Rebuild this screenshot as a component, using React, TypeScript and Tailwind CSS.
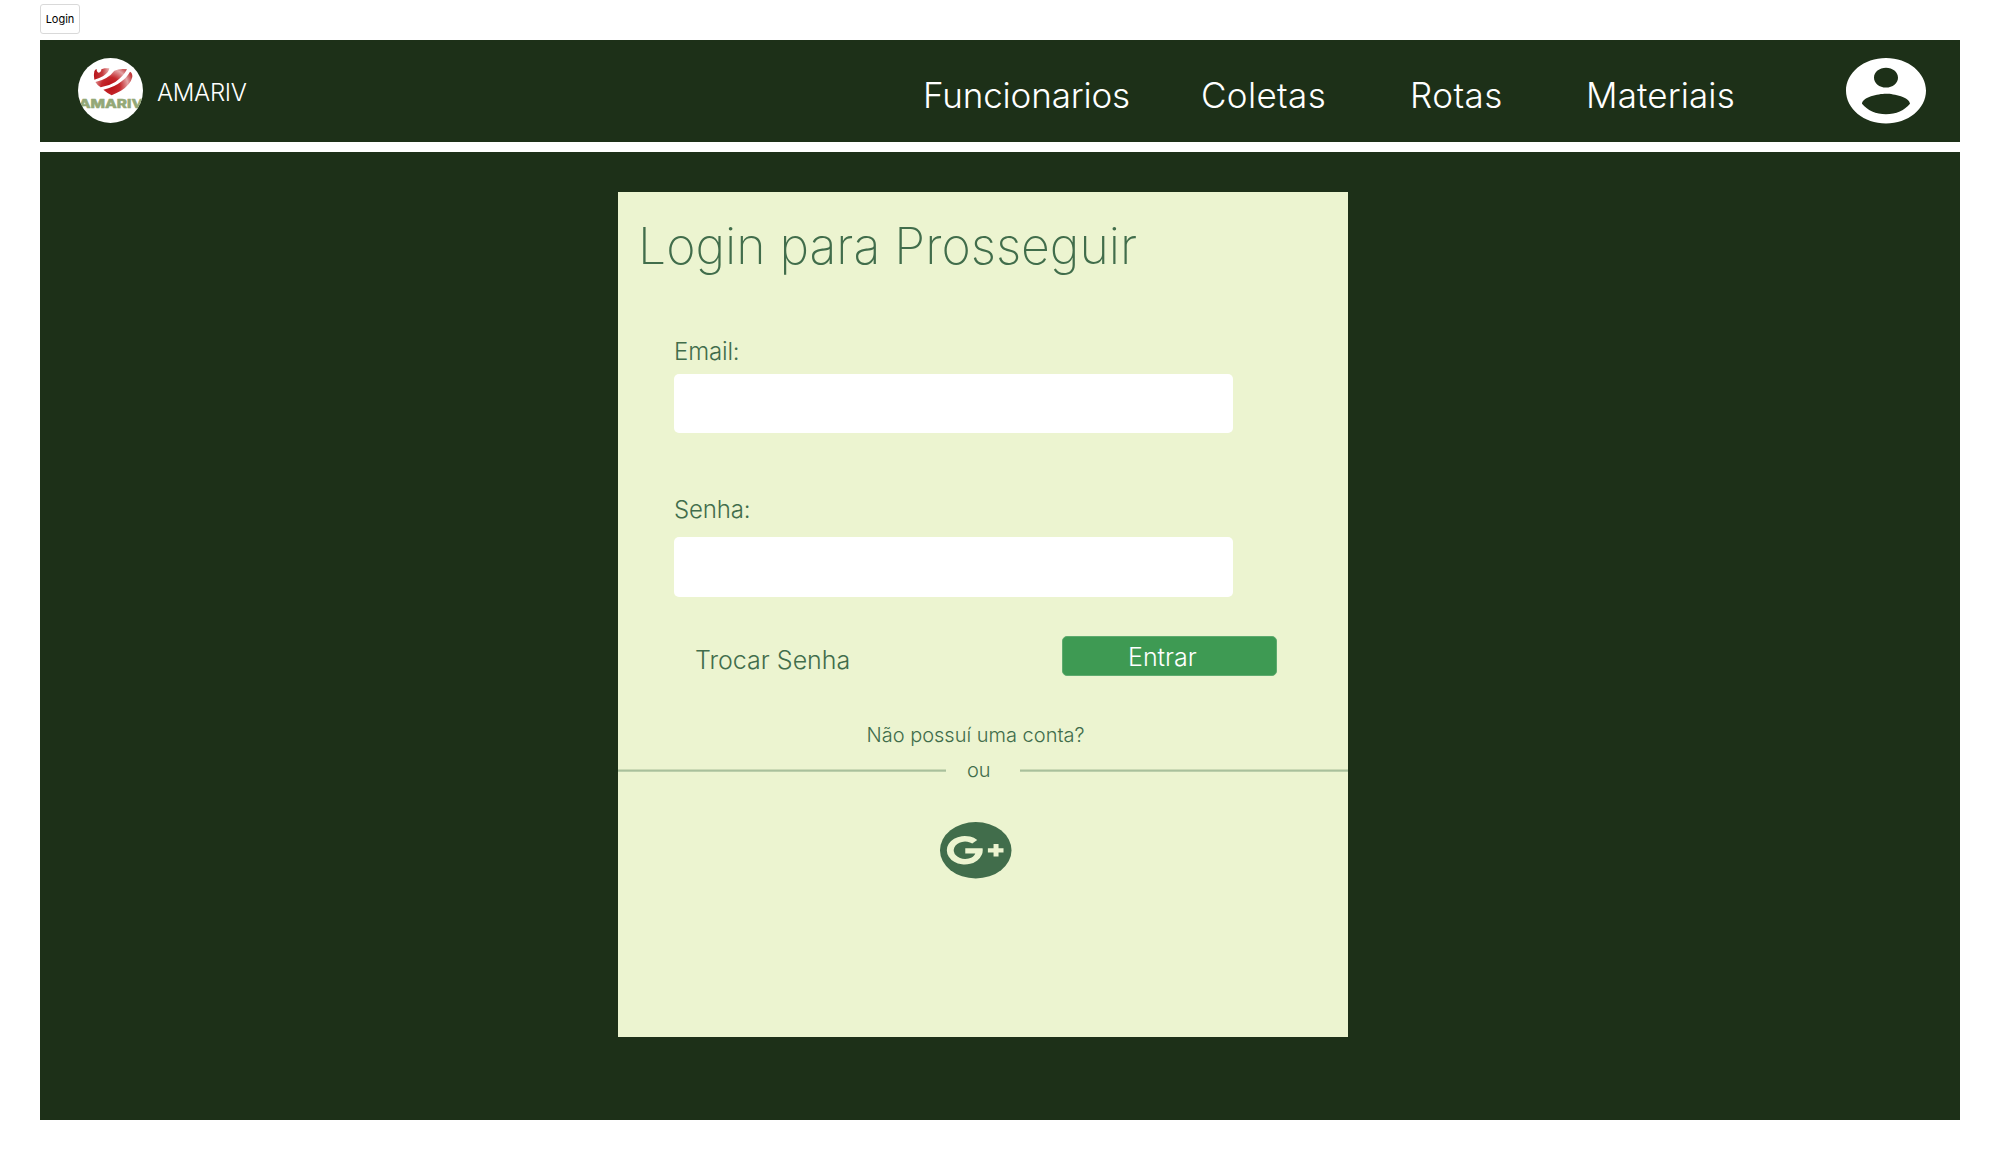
import React from "react";

function AmarivLogo() {
  return (
    <svg className="h-[65px] w-[65px] shrink-0" viewBox="0 0 195 195" role="img" aria-label="AMARIV">
      <defs>
        <clipPath id="disc">
          <circle cx="97.5" cy="97.5" r="97.5" />
        </clipPath>
        <radialGradient id="red" gradientUnits="userSpaceOnUse" cx="98" cy="86" r="70">
          <stop offset="0" stopColor="#b90f14" />
          <stop offset="0.4" stopColor="#c4282c" />
          <stop offset="0.75" stopColor="#e3a3a4" />
          <stop offset="1" stopColor="#c23a3d" />
        </radialGradient>
        <linearGradient id="lobe" x1="0" x2="1">
          <stop offset="0" stopColor="#b8141a" />
          <stop offset="0.55" stopColor="#c63a3d" />
          <stop offset="1" stopColor="#e9b4b4" />
        </linearGradient>
      </defs>
      <circle cx="97.5" cy="97.5" r="97.5" fill="#fff" />
      <g clipPath="url(#disc)">
        <path d="M49 40 Q51 34 56 33 Q56 43 62 44 Q70 43 70 34 L80 31 L94 31 Q93 43 76 54 Q62 62 49 65 Q46 52 49 40Z" fill="url(#lobe)" />
        <path d="M52 72 Q91 63 109 38 Q125 31 147 34 Q137 54 112 72 Q91 85 68 88 Q58 82 52 72Z" fill="url(#red)" />
        <path d="M76 95 Q108 89 131 70 Q149 55 156 41 Q164 45 163 57 Q158 80 129 98 Q113 106 101 112 Q90 107 76 95Z" fill="url(#red)" />
        <text x="2" y="149" textLength="194" lengthAdjust="spacingAndGlyphs" className="font-['Inter'] text-[36px] font-extrabold" fill="#94a877" stroke="#94a877" strokeWidth="1.5" strokeLinejoin="round">AMARIV</text>
      </g>
    </svg>
  );
}

function AccountIcon() {
  return (
    <svg className="h-[65.5px] w-20" viewBox="2 2 20 20" preserveAspectRatio="none" fill="#fff">
      <path d="M12 2C6.48 2 2 6.48 2 12s4.48 10 10 10 10-4.48 10-10S17.52 2 12 2zm0 3c1.66 0 3 1.34 3 3s-1.34 3-3 3-3-1.34-3-3 1.34-3 3-3zm0 14.2c-2.5 0-4.71-1.28-6-3.22.03-1.99 4-3.08 6-3.08 1.99 0 5.97 1.09 6 3.08-1.29 1.94-3.5 3.22-6 3.22z" />
    </svg>
  );
}

function GooglePlusIcon() {
  return (
    <svg className="h-[56.5px] w-[71.5px]" viewBox="0 0 215 170" preserveAspectRatio="none">
      <ellipse cx="107.5" cy="85" rx="107.5" ry="85" fill="#416d4b" />
      <g fill="#ecf4d0">
        <path d="M112 54 A54 43 0 1 0 128 79 H76 V95 H106 C102 105 91 111 76 111 A34 26 0 1 1 97 65 Z" />
        <path d="M161 66h15v13h15v13h-15v12h-15V92h-17V79h17Z" />
      </g>
    </svg>
  );
}

export default function App() {
  return (
    <div className="flex h-[1160px] w-[2000px] flex-col bg-white px-10 pt-1 font-['Inter',sans-serif] font-light">
      <div className="flex h-[30px] w-10 items-center justify-center rounded-[3px] border border-[#d9d9d9] text-[11px] leading-4 font-normal text-black">
        Login
      </div>

      <header className="mt-1.5 flex h-[102px] shrink-0 items-start bg-[#1d3018] pl-[38px] text-white">
        <div className="mt-[18px] flex">
          <AmarivLogo />
          <span className="mt-5 ml-[14px] w-[110px] text-[24px] leading-[30px] tracking-[-0.35px]">AMARIV</span>
        </div>
        <nav className="mt-[35px] ml-[656px] flex text-[35px] leading-[40px] whitespace-nowrap">
          <a className="w-[278px] tracking-[-0.15px]">Funcionarios</a>
          <a className="w-[209px] tracking-[0.35px]">Coletas</a>
          <a className="w-[176px] tracking-[0.45px]">Rotas</a>
          <a className="w-[260px] tracking-[0.12px]">Materiais</a>
        </nav>
        <div className="mt-[18px]">
          <AccountIcon />
        </div>
      </header>

      <main className="mt-2.5 flex h-[968px] shrink-0 items-start bg-[#1d3018] pt-10 pl-[578px]">
        <section className="flex h-[845px] w-[730px] flex-col bg-[#ecf4d0] text-[#416d4b]">
          <h1 className="mt-6 ml-5 text-[50px] leading-[60px] font-extralight tracking-[-0.03px] whitespace-nowrap">Login para Prosseguir</h1>
          <label className="mt-[61px] ml-14 text-[24px] leading-[30px] tracking-[-0.15px]">Email:</label>
          <input className="mt-[7px] ml-14 h-[59px] w-[559px] rounded-[5px] bg-white" />
          <label className="mt-[62px] ml-14 text-[24px] leading-[30px] tracking-[-0.15px]">Senha:</label>
          <input type="password" className="mt-[12px] ml-14 h-[60px] w-[559px] rounded-[5px] bg-white" />

          <div className="mt-[39px] flex h-10 pl-[77px]">
            <a className="w-[367px] pt-[9px] text-[25px] leading-[30px]">Trocar Senha</a>
            <button className="flex h-10 w-[215px] items-center rounded-[5px] border border-[#5fab6f] bg-[#3e9a53] pt-0.5 pl-[65px] text-[25px] leading-[30px] text-white">
              Entrar
            </button>
          </div>

          <p className="mt-[47px] ml-[248.5px] text-[20px] leading-6">Não possuí uma conta?</p>
          <div className="mt-[11px] flex h-6 items-center">
            <div className="h-[3px] w-[328px] border-y border-t-[#cbdab5] border-b-[#bccfab] bg-[#a9c09c]" />
            <span className="w-[74px] pl-[21px] text-[20px] leading-6">ou</span>
            <div className="h-[3px] w-[328px] border-y border-t-[#cbdab5] border-b-[#bccfab] bg-[#a9c09c]" />
          </div>
          <div className="mt-10 ml-[322px]">
            <GooglePlusIcon />
          </div>
        </section>
      </main>
    </div>
  );
}
